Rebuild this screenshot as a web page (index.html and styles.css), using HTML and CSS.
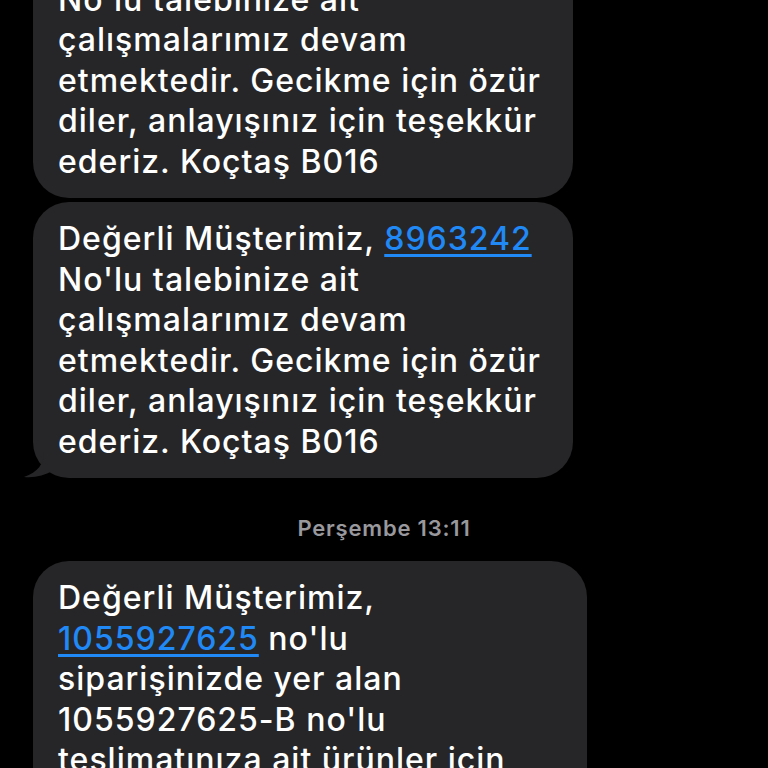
FILE: index.html
```html
<!DOCTYPE html>
<html lang="tr">
<head>
<meta charset="utf-8">
<title>Mesajlar</title>
<link rel="stylesheet" href="styles.css">
</head>
<body>
<main class="thread">
  <div class="group">
    <div class="bubble">Değerli Müşterimiz, <a class="link" href="#">8963242</a><br>No'lu talebinize ait<br>çalışmalarımız devam<br>etmektedir. Gecikme için özür<br>diler, anlayışınız için teşekkür<br>ederiz. Koçtaş B016</div>
    <div class="bubble bubble-last">Değerli Müşterimiz, <a class="link" href="#">8963242</a><br>No'lu talebinize ait<br>çalışmalarımız devam<br>etmektedir. Gecikme için özür<br>diler, anlayışınız için teşekkür<br>ederiz. Koçtaş B016<svg class="tail" width="30" height="26" viewBox="0 0 30 26"><path d="M20 0 C20 12 14 20 0 25 C10 26 20 24 30 18 L30 0 Z" fill="#262628"/></svg></div>
  </div>
  <div class="stamp">Perşembe 13:11</div>
  <div class="group">
    <div class="bubble bubble-wide">Değerli Müşterimiz,<br><a class="link" href="#">1055927625</a> no'lu<br>siparişinizde yer alan<br>1055927625-B no'lu<br>teslimatınıza ait ürünler için<br>çalışmalarımız devam<br>etmektedir.</div>
  </div>
</main>
</body>
</html>
```

FILE: styles.css
```css
html, body {
  margin: 0;
  padding: 0;
  background: #000;
  height: 768px;
  overflow: hidden;
}

.thread {
  display: flex;
  flex-direction: column;
  padding-left: 33px;
  margin-top: -78px;
  font-family: Inter, "Noto Sans", sans-serif;
}

.group {
  display: flex;
  flex-direction: column;
  gap: 4px;
}

.bubble {
  position: relative;
  width: 540px;
  box-sizing: border-box;
  background: #262628;
  color: #fff;
  border-radius: 36px;
  padding: 17px 20px 16px 25px;
  font-size: 32px;
  font-weight: 500;
  letter-spacing: 1px;
  line-height: 40.5px;
  white-space: nowrap;
}

.bubble-wide {
  width: 554px;
}

.link {
  color: #2089f6;
  text-decoration: underline;
  text-decoration-thickness: 3px;
  text-underline-offset: 4px;
}

.tail {
  position: absolute;
  left: -9px;
  bottom: 0;
}

.stamp {
  margin: 38px 0 21px -33px;
  text-align: center;
  color: #98989d;
  font-size: 22px;
  font-weight: 600;
  letter-spacing: 0.8px;
  line-height: 24px;
}
```
